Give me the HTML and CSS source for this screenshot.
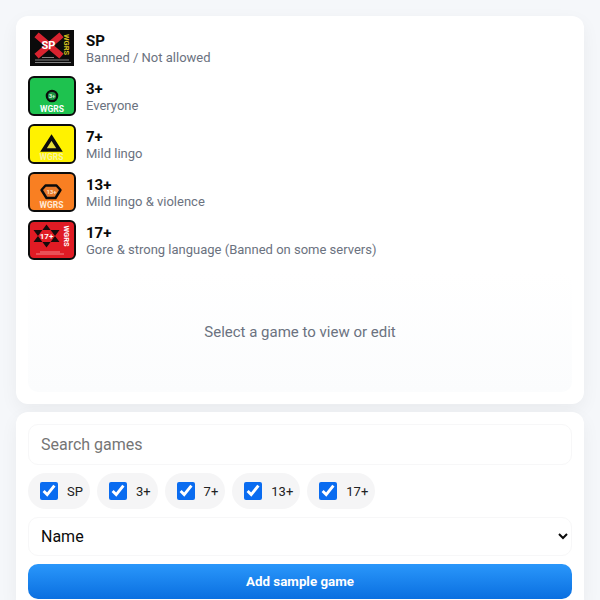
FILE: index.html
```html
<!DOCTYPE html>
<html lang="en">
<head>
<meta charset="utf-8">
<title>Game ratings</title>
<link rel="stylesheet" href="styles.css">
</head>
<body>
<main class="page">
  <section class="card top">
    <ul class="ratings">
      <li class="rating">
        <svg class="badge" viewBox="0 0 48 40"><rect x="2" y="2" width="44" height="36" fill="#0b0b0b"/><path d="M11 9l20 17M31 9L11 26" stroke="#d8232f" stroke-width="6.5" stroke-linecap="square"/><text x="20.5" y="21" class="bt" font-size="11" fill="#fff">SP</text><text class="bt" font-size="7.5" fill="#d7c21f" transform="translate(39 16.5) rotate(90)" y="2.6">WGRS</text><path d="M14 29.5h12M7 32h34M7 34.5h36" stroke="#b5b5b5" stroke-width=".7"/></svg>
        <div class="info"><strong class="name">SP</strong><span class="desc">Banned / Not allowed</span></div>
      </li>
      <li class="rating">
        <svg class="badge" viewBox="0 0 48 40"><rect x="1" y="1" width="46" height="38" rx="5" fill="#1ec24f" stroke="#0b0b0b" stroke-width="2"/><circle cx="24" cy="20" r="5.2" fill="#1a8f41" stroke="#0b0b0b" stroke-width="2.2"/><text x="24" y="22.2" class="bt" font-size="6" fill="#c9f3d5">3+</text><text x="24" y="35.5" class="bt" font-size="8.5" fill="#fff">WGRS</text></svg>
        <div class="info"><strong class="name">3+</strong><span class="desc">Everyone</span></div>
      </li>
      <li class="rating">
        <svg class="badge" viewBox="0 0 48 40"><rect x="1" y="1" width="46" height="38" rx="5" fill="#fff200" stroke="#0b0b0b" stroke-width="2"/><path d="M23.5 13.5l8 12.5h-16z" fill="#e6dc3a" stroke="#0b0b0b" stroke-width="3.6" stroke-linejoin="miter"/><text x="23.5" y="35.5" class="bt" font-size="8.5" fill="#f8f3a0">WGRS</text></svg>
        <div class="info"><strong class="name">7+</strong><span class="desc">Mild lingo</span></div>
      </li>
      <li class="rating">
        <svg class="badge" viewBox="0 0 48 40"><rect x="1" y="1" width="46" height="38" rx="5" fill="#f97f22" stroke="#0b0b0b" stroke-width="2"/><path d="M17.5 13.5h11l4 4.5-5 8h-9l-5-8z" fill="#e8792a" stroke="#0b0b0b" stroke-width="2.4" stroke-linejoin="round"/><text x="23.5" y="21.6" class="bt" font-size="6" fill="#ffe1c4">13+</text><text x="23.5" y="35.5" class="bt" font-size="8.5" fill="#ffe9d6">WGRS</text></svg>
        <div class="info"><strong class="name">13+</strong><span class="desc">Mild lingo &amp; violence</span></div>
      </li>
      <li class="rating">
        <svg class="badge" viewBox="0 0 48 40"><rect x="1" y="1" width="46" height="38" rx="5" fill="#e01b24" stroke="#0b0b0b" stroke-width="2"/><path d="M18.5 4.5l13 17.5h-26zM18.5 27.5l13-17.5h-26z" fill="#160b0b"/><text x="18.5" y="18.8" class="bt" font-size="8" fill="#fff">17+</text><text class="bt" font-size="7.5" fill="#fff" transform="translate(38.7 16) rotate(90)" y="2.6">WGRS</text><path d="M12 32h20M8 34h28" stroke="#f7b7b7" stroke-width=".7"/></svg>
        <div class="info"><strong class="name">17+</strong><span class="desc">Gore &amp; strong language (Banned on some servers)</span></div>
      </li>
    </ul>
    <div class="empty">Select a game to view or edit</div>
  </section>
  <section class="card controls">
    <input class="field search" type="text" placeholder="Search games">
    <div class="filters">
      <label class="chip"><input type="checkbox" checked><span>SP</span></label>
      <label class="chip"><input type="checkbox" checked><span>3+</span></label>
      <label class="chip"><input type="checkbox" checked><span>7+</span></label>
      <label class="chip"><input type="checkbox" checked><span>13+</span></label>
      <label class="chip"><input type="checkbox" checked><span>17+</span></label>
    </div>
    <select class="field sort"><option>Name</option></select>
    <button class="add" type="button">Add sample game</button>
  </section>
</main>
</body>
</html>
```
FILE: styles.css
```css
* { box-sizing: border-box; }
html, body { margin: 0; height: 600px; overflow: hidden; }
body { background: #f5f7fa; font-family: Roboto, "Liberation Sans", sans-serif; color: #0b0b0b; }
.page { display: flex; flex-direction: column; gap: 8px; padding: 16px; }
.card { background: #fff; border-radius: 12px; padding: 12px; box-shadow: 0 6px 18px rgba(0, 0, 0, .05); }
.top { height: 388px; display: flex; flex-direction: column; gap: 12px; }
.ratings { list-style: none; margin: 0; padding: 0; display: flex; flex-direction: column; gap: 8px; }
.rating { display: flex; align-items: center; gap: 10px; height: 40px; }
.badge { width: 48px; height: 40px; flex: none; display: block; }
.bt { font-family: Roboto, "Liberation Sans", sans-serif; font-weight: 700; text-anchor: middle; }
.info { display: flex; flex-direction: column; }
.name { font-size: 15px; line-height: 20px; font-weight: 700; }
.desc { font-size: 13px; line-height: 15px; margin-top: -1px; color: #6b7280; }
.empty { flex: 1; display: flex; align-items: center; justify-content: center; font-size: 15px; color: #6b7280; border-radius: 10px; background: linear-gradient(#fff, #fbfcfd); }
.controls { display: flex; flex-direction: column; gap: 8px; }
.field { width: 100%; padding: 0 12px; border: 1px solid #f7f7f8; border-radius: 10px; background: #fff; font: 16px Roboto, "Liberation Sans", sans-serif; color: #0b0b0b; outline: none; }
.search { height: 41px; }
.search::placeholder { color: #757575; }
.sort { height: 39px; padding-left: 8px; }
.filters { display: flex; gap: 7px; }
.chip { display: flex; align-items: center; gap: 9px; height: 36px; padding: 0 7px 0 12px; border-radius: 18px; background: #f5f5f6; font-size: 13px; color: #222; }
.chip input { width: 18px; height: 18px; margin: 0; accent-color: #0a6cf0; flex: none; }
.add { height: 35px; border: 0; border-radius: 10px; background: linear-gradient(#2a97fb, #0a6fe0); color: #fff; font: 700 13.33px Roboto, "Liberation Sans", sans-serif; }
```
